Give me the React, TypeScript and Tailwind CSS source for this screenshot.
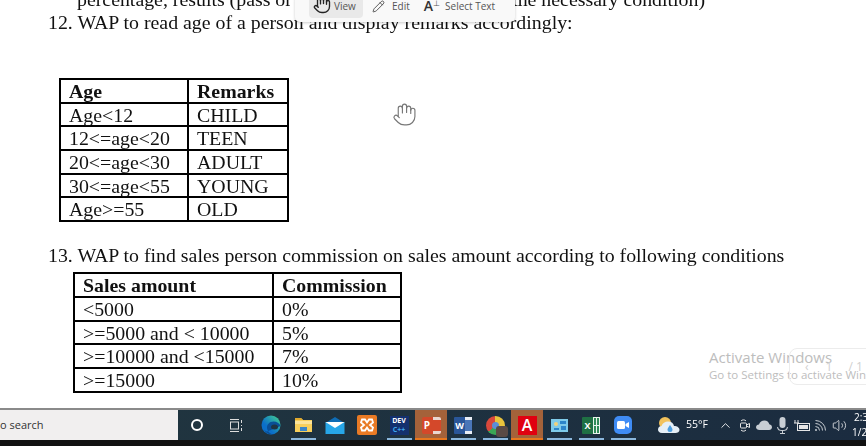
import { ReactNode } from "react";
import { ChevronUp, Hand, Pencil, Volume2 } from "lucide-react";

const ageRows = [
  { h: "h-[23px]", a: "Age<12", b: "CHILD" },
  { h: "h-[24px]", a: "12<=age<20", b: "TEEN" },
  { h: "h-[24px]", a: "20<=age<30", b: "ADULT" },
  { h: "h-[23px]", a: "30<=age<55", b: "YOUNG" },
  { h: "h-[24px]", a: "Age>=55", b: "OLD" },
];

const salesRows = [
  { h: "h-[24px]", a: "<5000", b: "0%" },
  { h: "h-[23px]", a: ">=5000 and < 10000", b: "5%" },
  { h: "h-[24px]", a: ">=10000 and <15000", b: "7%" },
  { h: "h-[24px]", a: ">=15000", b: "10%" },
];

function DocTable({
  head,
  rows,
  firstWidth,
  secondWidth,
}: {
  head: string[];
  rows: { h: string; a: string; b: string }[];
  firstWidth: string;
  secondWidth: string;
}) {
  return (
    <table className="table-fixed border-collapse border-2 border-black text-[19.85px] leading-[20px] text-[#111]">
      <tbody>
        <tr className="h-[24px]">
          <td className={`border-2 border-black px-[8px] py-0 font-bold ${firstWidth}`}>{head[0]}</td>
          <td className={`border-2 border-black px-[8px] py-0 font-bold ${secondWidth}`}>{head[1]}</td>
        </tr>
        {rows.map((r) => (
          <tr key={r.a} className={r.h}>
            <td className="border-2 border-black px-[8px] py-0">{r.a}</td>
            <td className="border-2 border-black px-[8px] py-0">{r.b}</td>
          </tr>
        ))}
      </tbody>
    </table>
  );
}

function Cell({
  children,
  width = "w-[32px]",
  line,
  bg,
}: {
  children: ReactNode;
  width?: string;
  line?: string;
  bg?: string;
}) {
  return (
    <div className={`relative flex h-full shrink-0 items-center justify-center ${width} ${bg ?? ""}`}>
      {children}
      {line && <div className={`absolute bottom-0 h-[2px] ${line}`} />}
    </div>
  );
}

function Toolbar() {
  return (
    <div className="absolute left-[295px] top-[-6px] h-[28px] w-[220px] rounded-[5px] bg-[#f9f9f9] pl-[14px] text-[10px] text-[#555] shadow-[0_1px_3px_rgba(0,0,0,0.2)] [font-family:'Open_Sans',sans-serif]">
      <div className="flex h-[24px] items-center">
        <div className="flex h-[24px] w-[54px] items-center rounded-[4px] bg-[#e9e9e9] pl-[4px]">
          <Hand size={18} strokeWidth={1.8} className="mt-[-2px] text-[#222]" />
          <span className="ml-[3px]">View</span>
        </div>
        <Pencil size={13} strokeWidth={1.6} className="ml-[9px] text-[#444]" />
        <span className="ml-[7px]">Edit</span>
        <span className="ml-[14px] text-[14px] font-semibold leading-none text-[#333]">A</span>
        <span className="mb-[6px] text-[8px] leading-none text-[#555]">⊥</span>
        <span className="ml-[5px]">Select Text</span>
      </div>
    </div>
  );
}

function EdgeIcon() {
  return (
    <svg width="20" height="20" viewBox="0 0 20 20">
      <defs>
        <linearGradient id="edge" x1="0" y1="1" x2="1" y2="0">
          <stop offset="0.35" stopColor="#0b6fc9" />
          <stop offset="1" stopColor="#46d58e" />
        </linearGradient>
      </defs>
      <circle cx="10" cy="10" r="9.500" fill="url(#edge)" />
      <path d="M19.500 11c-1 -3 -4 -4.500 -7 -4.500 -4 0 -6.500 3 -6.500 6 0 3 2.500 6 6 7 -4 0 -7 -1 -9 -5 2 2 3 2 3 2" fill="#0a4f96" />
      <ellipse cx="13.500" cy="12" rx="3.500" ry="2.500" fill="#1f3442" />
    </svg>
  );
}

function FolderIcon() {
  return (
    <svg width="19" height="16" viewBox="0 0 19 16">
      <path d="M1 1h6l2 2h9v12H1z" fill="#f7cf5c" />
      <path d="M1 1h6l2 2H1z" fill="#e0a92e" />
      <rect x="1" y="4" width="17" height="3" fill="#fbe49a" />
      <rect x="6" y="10" width="7" height="4" fill="#3a86c8" />
    </svg>
  );
}

function MailIcon() {
  return (
    <svg width="20" height="17" viewBox="0 0 20 17">
      <path d="M10 0l9.500 6H.5z" fill="#0f6cb5" />
      <rect x="0.500" y="5" width="19" height="12" fill="#27a6e8" />
      <path d="M.5 5l9.500 6 9.500-6z" fill="#fff" />
    </svg>
  );
}

function XamppIcon() {
  return (
    <svg width="20" height="20" viewBox="0 0 20 20">
      <rect width="20" height="20" rx="2" fill="#e87a25" />
      <path d="M5 4.500h3l2 3 2-3h3l1 3-3 2.500 3 2.500-1 3h-3l-2-3-2 3H5l-1-3 3-2.500-3-2.500z" fill="none" stroke="#fff" strokeWidth="1.800" />
    </svg>
  );
}

function ChromeIcon() {
  return (
    <div className="relative h-[19px] w-[19px] rounded-full bg-[conic-gradient(#e9c33c_0deg,#e9c33c_110deg,#3aa655_110deg,#3aa655_230deg,#d9483b_230deg,#d9483b_360deg)]">
      <div className="absolute left-[6px] top-[6px] h-[7px] w-[7px] rounded-full bg-[#5b8fd8]" />
      <div className="absolute bottom-[-2px] right-[-3px] h-[11px] w-[12px] rounded-[3px] bg-[#5a4a45]" />
    </div>
  );
}

function PhotosIcon() {
  return (
    <svg width="17" height="13" viewBox="0 0 17 13">
      <rect width="17" height="13" fill="#7fcbe9" />
      <circle cx="5" cy="5" r="2" fill="#f2d27a" />
      <path d="M9 2h6v3H9zM3 9h5v2H3zM10 7h5v4h-5z" fill="#2c86c9" />
    </svg>
  );
}

function ExcelIcon() {
  return (
    <div className="flex h-[17px] w-[18px]">
      <div className="flex w-[11px] items-center justify-center rounded-l-[1px] bg-[#1f7044] text-[9px] font-bold leading-none">X</div>
      <div className="grid w-[7px] grid-cols-2 gap-[1px] border border-[#e8f2ec] bg-[#e8f2ec]">
        <div className="bg-[#2f8a57]" />
        <div className="bg-[#2f8a57]" />
        <div className="bg-[#2f8a57]" />
        <div className="bg-[#2f8a57]" />
      </div>
    </div>
  );
}

function WeatherIcon() {
  return (
    <svg width="24" height="18" viewBox="0 0 24 18">
      <circle cx="8" cy="7" r="6" fill="#f2c25c" />
      <path d="M5 17c-3 0-4-2-4-3.500C1 11 3 10 4.500 10 5.500 7 8 5.500 11 5.500c3.500 0 5.500 2 6 4.500 3 0 5.500 1.500 5.500 4 0 2-2 3-4 3z" fill="#e6eff6" />
      <path d="M13 9c1.500 2 2.500 3.500 2.500 4.500a2.500 2.500 0 0 1-5 0C10.500 12.500 11.500 11 13 9z" fill="#4e9fe0" />
    </svg>
  );
}

export default function App() {
  return (
    <div className="flex h-[446px] w-[866px] flex-col overflow-hidden bg-white [font-family:'Liberation_Serif',serif]">
      <main className="relative h-[408px] shrink-0 overflow-hidden">
        <div className="blur-[0.3px]">
          <div className="mt-[-12px] flex w-[720px] justify-between whitespace-nowrap pl-[77px] text-[19.85px] leading-[23px] text-[#111]">
            <span>percentage, results (pass or</span>
            <span className="mr-[15px]">the necessary condition)</span>
          </div>
          <p className="whitespace-nowrap pl-[48px] text-[19.85px] leading-[23px] text-[#111]">
            12. WAP to read age of a person and display remarks accordingly:
          </p>
          <div className="mt-[44px] pl-[59px]">
            <DocTable head={["Age", "Remarks"]} rows={ageRows} firstWidth="w-[128px]" secondWidth="w-[100px]" />
          </div>
          <p className="mt-[22px] whitespace-nowrap pl-[48px] text-[19.85px] leading-[23px] text-[#111]">
            13. WAP to find sales person commission on sales amount according to following conditions
          </p>
          <div className="mt-[5px] pl-[73px]">
            <DocTable head={["Sales amount", "Commission"]} rows={salesRows} firstWidth="w-[199px]" secondWidth="w-[128px]" />
          </div>
        </div>

        <Toolbar />
        <Hand size={25} strokeWidth={1.1} className="absolute left-[392px] top-[102px] text-[#777]" />

        <div className="absolute left-[709px] top-[347px] whitespace-nowrap text-[#bdbdbd] [font-family:'Open_Sans',sans-serif]">
          <div className="text-[15px] leading-[20px]">Activate Windows</div>
          <div className="text-[11.5px] leading-[16px]">Go to Settings to activate Windows.</div>
        </div>
        <div className="absolute left-[789px] top-[348px] flex h-[37px] w-[90px] items-center rounded-[8px] border border-[#ececec] pl-[15px] text-[12px] text-[#d0d0d0] [font-family:'Open_Sans',sans-serif]">
          <span>‹</span>
          <span className="ml-[17px]">1</span>
          <span className="ml-[16px]">/ 1</span>
        </div>
      </main>

      <footer className="h-[38px] shrink-0 bg-[#111]">
        <div className="flex h-[32px] border-t-2 border-[#8a8a8a] bg-gradient-to-r from-[#21363f] to-[#1b2c40] text-white [font-family:'Open_Sans',sans-serif]">
          <div className="flex h-full w-[178px] shrink-0 items-center bg-[#f1efef] text-[11px] text-[#333]">
            <span className="whitespace-nowrap">o search</span>
          </div>
          <div className="flex h-full flex-1 items-center overflow-hidden blur-[0.3px]">
            <Cell width="w-[38px]">
              <div className="h-[12px] w-[12px] rounded-full border-2 border-white" />
            </Cell>
            <Cell width="w-[39px]">
              <svg width="14" height="13" viewBox="0 0 14 13" fill="none" stroke="#ddd">
                <rect x="1.500" y="3" width="8" height="7" />
                <path d="M1 .5h9M1 12.500h9M12.500 1v3M12.500 6v1M12.500 9v3" />
              </svg>
            </Cell>
            <Cell>
              <EdgeIcon />
            </Cell>
            <Cell line="w-[25px] bg-[#8bb7dc]">
              <FolderIcon />
            </Cell>
            <Cell>
              <MailIcon />
            </Cell>
            <Cell>
              <XamppIcon />
            </Cell>
            <Cell line="w-[25px] bg-[#8bb7dc]">
              <div className="flex h-[19px] w-[19px] flex-col items-center bg-[#14306e] text-[7px] font-bold leading-[9px]">
                <span>DEV</span>
                <span className="text-[#3fa9ef]">C++</span>
              </div>
            </Cell>
            <Cell bg="bg-[#a4623a]" line="w-full bg-[#e8771e]">
              <div className="flex h-[17px] w-[19px] overflow-hidden rounded-[2px]">
                <div className="flex w-[11px] items-center justify-center bg-[#d4482a] text-[10px] font-bold leading-none">P</div>
                <div className="flex-1 border-y-[3px] border-[#e9d8d0] bg-[#d4482a]" />
              </div>
            </Cell>
            <Cell line="w-[25px] bg-[#8bb7dc]">
              <div className="flex h-[17px] w-[18px]">
                <div className="flex w-[11px] items-center justify-center rounded-l-[1px] bg-[#2a5699] text-[9px] font-bold leading-none">W</div>
                <div className="flex-1 border-y-[3px] border-[#e8edf5] bg-[#4a76b8]" />
              </div>
            </Cell>
            <Cell line="w-[25px] bg-[#8bb7dc]">
              <ChromeIcon />
            </Cell>
            <Cell bg="bg-[#a4623a]" line="w-full bg-[#e8771e]">
              <div className="flex h-[19px] w-[19px] items-center justify-center bg-[#e00010] text-[16px] font-semibold leading-none">
                A
              </div>
            </Cell>
            <Cell line="w-[25px] bg-[#8bb7dc]">
              <PhotosIcon />
            </Cell>
            <Cell line="w-[25px] bg-[#8bb7dc]">
              <ExcelIcon />
            </Cell>
            <Cell line="w-[25px] bg-[#8bb7dc]">
              <div className="flex h-[18px] w-[18px] items-center justify-center rounded-[5px] bg-[#3f8cf5]">
                <svg width="12" height="8" viewBox="0 0 12 8" fill="#fff">
                  <rect width="8" height="8" rx="1.500" />
                  <path d="M8.500 3L12 1v6L8.500 5z" />
                </svg>
              </div>
            </Cell>

            <div className="ml-[18px] flex w-[24px] shrink-0 justify-center">
              <WeatherIcon />
            </div>
            <span className="ml-[5px] w-[21px] shrink-0 whitespace-nowrap text-[10.5px]">55°F</span>
            <Cell width="ml-[9px] w-[19px]">
              <ChevronUp size={15} strokeWidth={1.4} />
            </Cell>
            <Cell width="w-[19px]">
              <svg width="12" height="15" viewBox="0 0 12 15" fill="none" stroke="#e5e5e5" strokeWidth="1">
                <rect x="1.500" y="5" width="6" height="5" rx="1" />
                <path d="M7.500 7l3-1.500v4l-3-1.500M2 3c1-1.500 4-1.500 5 0M2 12c1 1.500 4 1.500 5 0" />
              </svg>
            </Cell>
            <Cell width="w-[19px]">
              <svg width="16" height="10" viewBox="0 0 16 10" fill="#c8ced4">
                <path d="M3.500 10C1.500 10 0 8.800 0 7.200 0 5.700 1.300 4.500 3 4.500 3.800 2 5.800.5 8.500.5c2.500 0 4.300 1.500 4.800 3.700C15 4.500 16 5.800 16 7.200 16 8.800 14.700 10 13 10z" />
              </svg>
            </Cell>
            <Cell width="w-[19px]">
              <svg width="11" height="17" viewBox="0 0 11 17" fill="#c8ced4">
                <rect x="2.500" y="0" width="6" height="11" rx="3" />
                <path d="M0 10h1c.5 2.500 2 3 4.500 3s4-.5 4.500-3h1c-.5 3-2 4-5 4v2H8v1H3v-1h2v-2c-3 0-4.500-1-5-4z" />
              </svg>
            </Cell>
            <Cell width="w-[19px]">
              <svg width="16" height="11" viewBox="0 0 16 11" fill="none" stroke="#e5e5e5">
                <rect x="3.500" y="3.500" width="12" height="7" />
                <rect x="5" y="5" width="9" height="4" fill="#e5e5e5" stroke="none" />
                <path d="M1 0v3M4 0v3M0 3h5" />
              </svg>
            </Cell>
            <Cell width="w-[19px]">
              <svg width="13" height="13" viewBox="0 0 13 13" fill="none" stroke="#c9ced3" strokeWidth="1">
                <path d="M.5 5.500a7 7 0 0 1 7 7M.5 2.500a10 10 0 0 1 10 10M.5 8.500a4 4 0 0 1 4 4" transform="translate(1 -1)" />
                <circle cx="2" cy="11" r="1" fill="#c9ced3" stroke="none" />
              </svg>
            </Cell>
            <Cell width="w-[19px]">
              <Volume2 size={15} strokeWidth={1.2} />
            </Cell>
            <div className="ml-[5px] flex w-[12px] shrink-0 flex-col whitespace-nowrap text-[10px] leading-[15px]">
              <span>2:3</span>
              <span className="ml-[-2px]">1/2</span>
            </div>
          </div>
        </div>
      </footer>
    </div>
  );
}
